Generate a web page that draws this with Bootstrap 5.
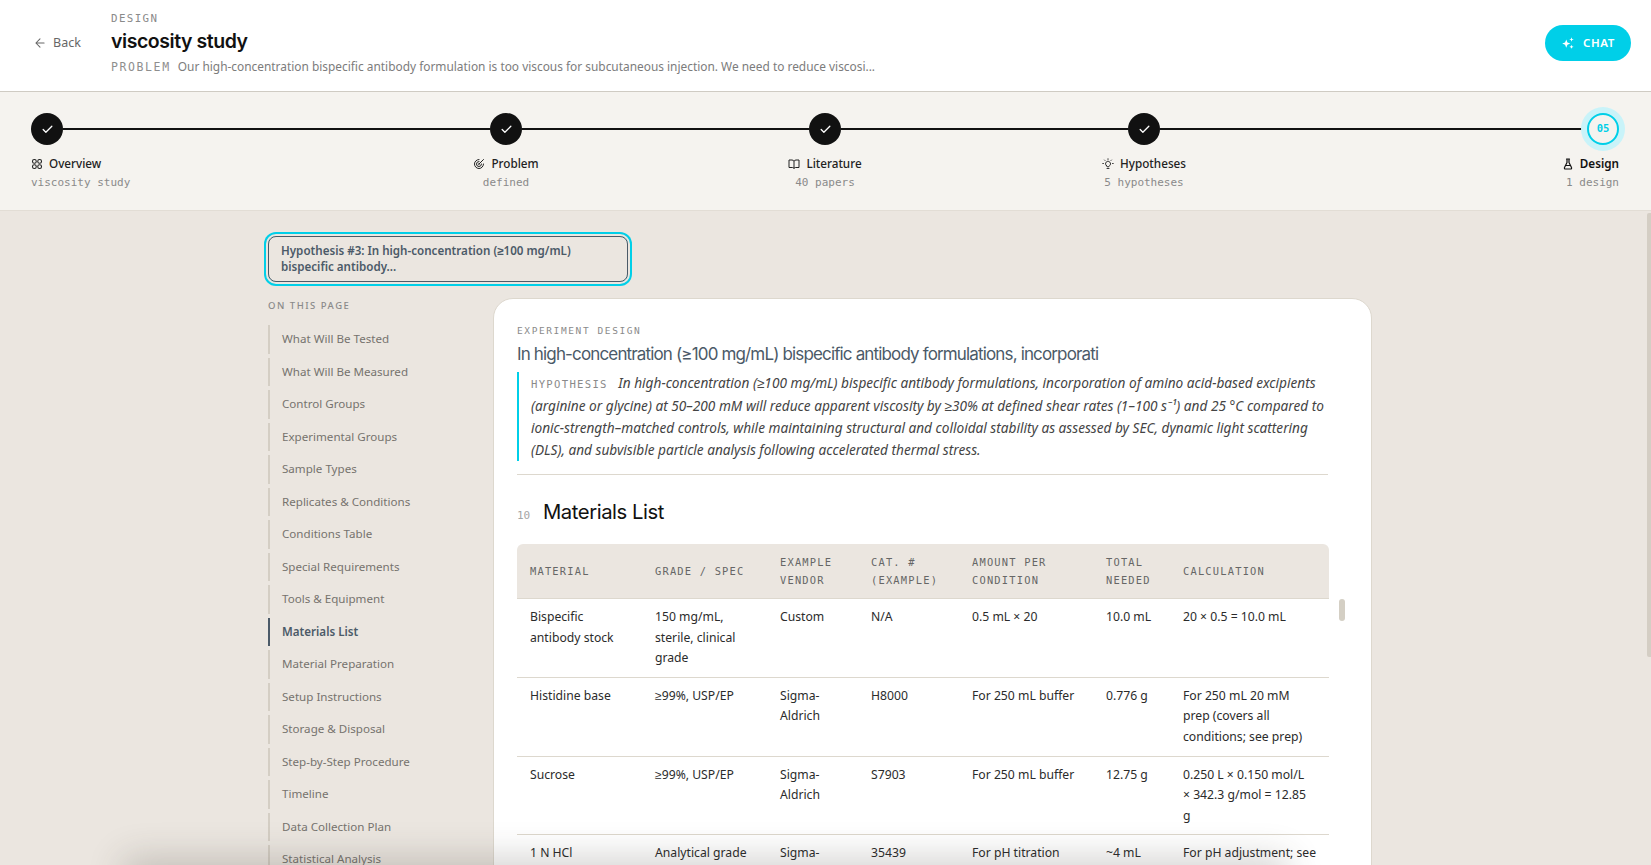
<!DOCTYPE html>
<html lang="en">
<head>
  <meta charset="UTF-8" />
  <meta name="viewport" content="width=device-width, initial-scale=1" />
  <title>viscosity study</title>
  <link href="https://cdn.jsdelivr.net/npm/bootstrap@5.3.0/dist/css/bootstrap.min.css" rel="stylesheet" />
  <style>
    html, body { height: 100%; overflow: hidden; }
    body { background: #ebe6e0; color: #1c1c1c; font-family: "Noto Sans", sans-serif; font-size: 13px; }
    .mono { font-family: "DejaVu Sans Mono", monospace; }

    .top-head { height: 92px; background: #fff; border-bottom: 1px solid #cfcbc3; padding: 0 20px 0 33px; }
    .back-btn { width: 78px; color: #666; font-size: 12.5px; margin-top: -5px; text-decoration: none; gap: 6px; }
    .head-kicker { font-size: 10.8px; letter-spacing: 1.4px; color: #8a8a8a; line-height: 14px; margin-top: 12px; }
    .head-title { font-family: Inter, sans-serif; font-weight: 600; font-size: 19.500px; letter-spacing: -.45px; line-height: 24px; margin: 3px 0 4px; color: #111; }
    .head-problem { font-size: 11.9px; color: #7c7c7c; line-height: 18px; }
    .head-problem .mono { font-size: 11.5px; letter-spacing: 1.6px; margin-right: 4px; color: #8e8e8e; }
    .chat-btn { width: 86px; height: 36px; margin-top: -5px; background: #00cfe8; color: #fff; border: 0; border-radius: 18px; font-size: 11.5px; font-weight: 600; letter-spacing: .6px; }

    .stepper { height: 119px; background: #f5f3ef; border-bottom: 1px solid #e2ddd5; padding: 21px 32px 0 31px; }
    .step-node { width: 32px; flex: none; }
    .step-first { align-items: flex-start; }
    .step-last { align-items: flex-end; }
    .step-dot { width: 32px; height: 32px; border-radius: 50%; background: #111; color: #fff; }
    .step-now { background: #f5f3ef; border: 2px solid #00cfe8; color: #00cfe8; font-size: 10.5px; font-weight: 700; box-shadow: 0 0 0 6px #c9f3f9; }
    .step-line { height: 2px; background: #111; margin-top: 15px; }
    .grow-long { flex: 427 1 0; }
    .grow-short { flex: 287 1 0; }
    .step-name { font-size: 11.7px; font-weight: 500; line-height: 16px; margin-top: 10px; color: #222; white-space: nowrap; }
    .step-name svg { margin-right: 6px; vertical-align: -2px; }
    .step-last .step-name { font-weight: 600; color: #111; }
    .step-sub { font-size: 11px; line-height: 14px; margin-top: 5px; color: #8a8a8a; white-space: nowrap; }

    .page-body { height: 654px; overflow: hidden; padding: 21px 0 0 264px; }
    .hyp-btn { width: 360px; height: 46px; margin: 4px 0 0 4px; padding: 0 12px; text-align: left; background: transparent; border: 1px solid #4b5a68; border-radius: 8px; box-shadow: 0 0 0 2px #ebe6e0, 0 0 0 4px #00cfe8; color: #4b5a68; font-size: 11.6px; font-weight: 600; line-height: 16px; }
    .two-col { align-items: flex-start; }
    .side-col { width: 229px; flex: none; padding: 17px 0 0 4px; }
    .side-head { font-size: 9.5px; font-weight: 500; letter-spacing: 1.5px; color: #8a8a8a; line-height: 14px; margin-bottom: 12px; }
    .side-link { display: block; height: 28.5px; margin-bottom: 4px; padding-left: 12px; border-left: 2px solid #d4cec4; color: #76736e; font-size: 11.6px; line-height: 28.5px; text-decoration: none; white-space: nowrap; }
    .side-link.on { border-left-color: #4b5a68; color: #4b5a68; font-weight: 600; }

    .paper { width: 879px; flex: none; background: #fff; border: 1px solid #ddd8ce; border-radius: 20px; padding: 25px 43px 0 23px; margin-top: 16px; position: relative; }
    .paper-kicker { font-size: 9.5px; letter-spacing: 1.6px; color: #8a8a8a; line-height: 14px; }
    .paper-title { font-family: Inter, sans-serif; font-weight: 400; font-size: 17px; letter-spacing: -.85px; line-height: 24px; color: #4b5a68; margin: 4px 0 6px; white-space: nowrap; }
    .hyp-quote { border-left: 2px solid #00cfe8; padding-left: 12px; font-style: italic; font-size: 13.65px; line-height: 22px; color: #444; margin-bottom: 13px; }
    .hyp-quote .mono { font-style: normal; font-size: 10.6px; letter-spacing: 1.3px; color: #8a8a8a; margin-right: 7px; }
    .rule { height: 1px; background: #ddd8ce; }
    .sec-head { margin: 25px 0 13px; line-height: 30px; }
    .sec-num { font-size: 11px; color: #a5a5a5; width: 26px; flex: none; }
    .sec-title { font-family: Inter, sans-serif; font-weight: 400; font-size: 20.3px; letter-spacing: -.45px; color: #111; margin: 0; }

    .mat-table { table-layout: fixed; width: 812px; margin: 0; font-size: 12.2px; line-height: 20.6px; color: #2b2b2b; }
    .mat-table th { background: #ebe6e0; font-family: "DejaVu Sans Mono", monospace; font-weight: 400; font-size: 10.4px; letter-spacing: 1.2px; line-height: 18px; color: #666; padding: 9px 12px 9px 13px; vertical-align: middle; border-bottom: 1px solid #ddd8ce; }
    .mat-table th:first-child { border-top-left-radius: 6px; }
    .mat-table th:last-child { border-top-right-radius: 6px; }
    .mat-table td { padding: 8px 12px 8px 13px; vertical-align: top; border-bottom: 1px solid #ddd8ce; background: #fff; color: #2b2b2b; }
    .cw-1, .cw-2 { width: 125px; }
    .cw-3 { width: 91px; }
    .cw-4 { width: 101px; }
    .cw-5 { width: 134px; }
    .cw-6 { width: 77px; }
    .cw-7 { width: 159px; }

    .inner-thumb { position: absolute; left: 845px; top: 300px; width: 6px; height: 22px; border-radius: 3px; background: #d4cfc4; }
    .page-thumb { position: fixed; right: 0; top: 213px; width: 4px; height: 444px; border-radius: 2px 0 0 2px; background: #d4cec4; }
    .bottom-fade { position: fixed; left: 130px; right: 370px; bottom: -26px; height: 26px; box-shadow: 0 0 36px 6px rgba(60, 55, 45, .24); }
  </style>
</head>

<body>
  <header class="top-head d-flex align-items-center">
    <a href="#" class="back-btn d-flex align-items-center">
      <svg width="14" height="14" viewBox="0 0 24 24" fill="none" stroke="currentColor" stroke-width="1.8" stroke-linecap="round" stroke-linejoin="round"><path d="M19 12H5M12 19l-7-7 7-7"/></svg>
      Back
    </a>
    <div class="flex-grow-1 align-self-start">
      <div class="head-kicker mono">DESIGN</div>
      <h1 class="head-title">viscosity study</h1>
      <div class="head-problem"><span class="mono">PROBLEM</span> Our high-concentration bispecific antibody formulation is too viscous for subcutaneous injection. We need to reduce viscosi...</div>
    </div>
    <button class="chat-btn d-flex align-items-center justify-content-center gap-2">
      <svg width="14" height="14" viewBox="0 0 24 24" fill="#fff"><path d="M9 6l2 5 5 2-5 2-2 5-2-5-5-2 5-2z"/><path d="M18 2l1 3 3 1-3 1-1 3-1-3-3-1 3-1z"/><path d="M18 15l1 2.500 2.500 1-2.500 1-1 2.500-1-2.500-2.500-1 2.500-1z"/></svg>
      CHAT
    </button>
  </header>

  <section class="stepper d-flex align-items-start">
    <div class="step-node step-first d-flex flex-column">
      <div class="step-dot d-flex align-items-center justify-content-center"><svg width="13" height="13" viewBox="0 0 24 24" fill="none" stroke="currentColor" stroke-width="2.400" stroke-linecap="round" stroke-linejoin="round"><path d="M20 6L9 17l-5-5"/></svg></div>
      <div class="step-name"><svg width="12" height="12" viewBox="0 0 24 24" fill="none" stroke="currentColor" stroke-width="2.200"><rect x="3" y="3" width="7.500" height="7.500" rx="3.500"/><rect x="13.500" y="3" width="7.500" height="7.500" rx="3.500"/><rect x="3" y="13.500" width="7.500" height="7.500" rx="3.500"/><rect x="13.500" y="13.500" width="7.500" height="7.500" rx="3.500"/></svg>Overview</div>
      <div class="step-sub mono">viscosity study</div>
    </div>
    <div class="step-line grow-long"></div>
    <div class="step-node d-flex flex-column align-items-center">
      <div class="step-dot d-flex align-items-center justify-content-center"><svg width="13" height="13" viewBox="0 0 24 24" fill="none" stroke="currentColor" stroke-width="2.400" stroke-linecap="round" stroke-linejoin="round"><path d="M20 6L9 17l-5-5"/></svg></div>
      <div class="step-name"><svg width="12" height="12" viewBox="0 0 24 24" fill="none" stroke="currentColor" stroke-width="2" stroke-linecap="round"><path d="M21 12a9 9 0 1 1-9-9"/><path d="M17 12a5 5 0 1 1-5-5"/><path d="M13 12a1 1 0 1 1-1-1"/><path d="M12 12l9-9"/></svg>Problem</div>
      <div class="step-sub mono">defined</div>
    </div>
    <div class="step-line grow-short"></div>
    <div class="step-node d-flex flex-column align-items-center">
      <div class="step-dot d-flex align-items-center justify-content-center"><svg width="13" height="13" viewBox="0 0 24 24" fill="none" stroke="currentColor" stroke-width="2.400" stroke-linecap="round" stroke-linejoin="round"><path d="M20 6L9 17l-5-5"/></svg></div>
      <div class="step-name"><svg width="12" height="12" viewBox="0 0 24 24" fill="none" stroke="currentColor" stroke-width="2" stroke-linejoin="round"><path d="M12 7v14M2 4h6a4 4 0 0 1 4 3 4 4 0 0 1 4-3h6v15h-7a3 3 0 0 0-3 2 3 3 0 0 0-3-2H2z"/></svg>Literature</div>
      <div class="step-sub mono">40 papers</div>
    </div>
    <div class="step-line grow-short"></div>
    <div class="step-node d-flex flex-column align-items-center">
      <div class="step-dot d-flex align-items-center justify-content-center"><svg width="13" height="13" viewBox="0 0 24 24" fill="none" stroke="currentColor" stroke-width="2.400" stroke-linecap="round" stroke-linejoin="round"><path d="M20 6L9 17l-5-5"/></svg></div>
      <div class="step-name"><svg width="12" height="12" viewBox="0 0 24 24" fill="none" stroke="currentColor" stroke-width="1.800" stroke-linecap="round"><path d="M9 15.500a5 5 0 1 1 6 0c-.6.500-1 1-1 2h-4c0-1-.4-1.500-1-2zM10 21h4M12 1.500v1.500M3 11H1.500M22.500 11H21M5 4l1 1M19 4l-1 1"/></svg>Hypotheses</div>
      <div class="step-sub mono">5 hypotheses</div>
    </div>
    <div class="step-line grow-long"></div>
    <div class="step-node step-last d-flex flex-column">
      <div class="step-dot step-now mono d-flex align-items-center justify-content-center">05</div>
      <div class="step-name"><svg width="12" height="12" viewBox="0 0 24 24" fill="none" stroke="currentColor" stroke-width="2.400" stroke-linejoin="round" stroke-linecap="round"><path d="M9 2h6M10 2v7l-5 10a2 2 0 0 0 2 3h10a2 2 0 0 0 2-3L14 9V2M7.500 15h9"/></svg>Design</div>
      <div class="step-sub mono">1 design</div>
    </div>
  </section>

  <main class="page-body">
    <button class="hyp-btn d-block">Hypothesis #3: In high-concentration (≥100 mg/mL) bispecific antibody...</button>
    <div class="two-col d-flex">
      <nav class="side-col">
        <div class="side-head">ON THIS PAGE</div>
        <a class="side-link" href="#">What Will Be Tested</a>
        <a class="side-link" href="#">What Will Be Measured</a>
        <a class="side-link" href="#">Control Groups</a>
        <a class="side-link" href="#">Experimental Groups</a>
        <a class="side-link" href="#">Sample Types</a>
        <a class="side-link" href="#">Replicates &amp; Conditions</a>
        <a class="side-link" href="#">Conditions Table</a>
        <a class="side-link" href="#">Special Requirements</a>
        <a class="side-link" href="#">Tools &amp; Equipment</a>
        <a class="side-link on" href="#">Materials List</a>
        <a class="side-link" href="#">Material Preparation</a>
        <a class="side-link" href="#">Setup Instructions</a>
        <a class="side-link" href="#">Storage &amp; Disposal</a>
        <a class="side-link" href="#">Step-by-Step Procedure</a>
        <a class="side-link" href="#">Timeline</a>
        <a class="side-link" href="#">Data Collection Plan</a>
        <a class="side-link" href="#">Statistical Analysis</a>
      </nav>

      <article class="paper">
        <div class="paper-kicker mono">EXPERIMENT DESIGN</div>
        <h2 class="paper-title">In high-concentration (≥100 mg/mL) bispecific antibody formulations, incorporati</h2>
        <blockquote class="hyp-quote"><span class="mono">HYPOTHESIS</span> In high-concentration (≥100 mg/mL) bispecific antibody formulations, incorporation of amino acid-based excipients (arginine or glycine) at 50–200 mM will reduce apparent viscosity by ≥30% at defined shear rates (1–100 s⁻¹) and 25 °C compared to ionic-strength–matched controls, while maintaining structural and colloidal stability as assessed by SEC, dynamic light scattering (DLS), and subvisible particle analysis following accelerated thermal stress.</blockquote>
        <div class="rule"></div>
        <div class="sec-head d-flex align-items-baseline">
          <span class="sec-num mono">10</span>
          <h3 class="sec-title">Materials List</h3>
        </div>
        <table class="table mat-table">
          <colgroup><col class="cw-1"><col class="cw-2"><col class="cw-3"><col class="cw-4"><col class="cw-5"><col class="cw-6"><col class="cw-7"></colgroup>
          <thead>
            <tr><th>MATERIAL</th><th>GRADE / SPEC</th><th>EXAMPLE VENDOR</th><th>CAT. # (EXAMPLE)</th><th>AMOUNT PER CONDITION</th><th>TOTAL NEEDED</th><th>CALCULATION</th></tr>
          </thead>
          <tbody>
            <tr><td>Bispecific antibody stock</td><td>150 mg/mL, sterile, clinical grade</td><td>Custom</td><td>N/A</td><td>0.5 mL × 20</td><td>10.0 mL</td><td>20 × 0.5 = 10.0 mL</td></tr>
            <tr><td>Histidine base</td><td>≥99%, USP/EP</td><td>Sigma-Aldrich</td><td>H8000</td><td>For 250 mL buffer</td><td>0.776 g</td><td>For 250 mL 20 mM prep (covers all conditions; see prep)</td></tr>
            <tr><td>Sucrose</td><td>≥99%, USP/EP</td><td>Sigma-Aldrich</td><td>S7903</td><td>For 250 mL buffer</td><td>12.75 g</td><td>0.250 L × 0.150 mol/L<br>× 342.3 g/mol = 12.85<br>g</td></tr>
            <tr><td>1 N HCl</td><td>Analytical grade</td><td>Sigma-Aldrich</td><td>35439</td><td>For pH titration</td><td>~4 mL</td><td>For pH adjustment; see prep</td></tr>
          </tbody>
        </table>
        <div class="inner-thumb"></div>
      </article>
    </div>
  </main>

  <div class="page-thumb"></div>
  <div class="bottom-fade"></div>

  <script src="https://cdn.jsdelivr.net/npm/bootstrap@5.3.0/dist/js/bootstrap.bundle.min.js"></script>
</body>
</html>
